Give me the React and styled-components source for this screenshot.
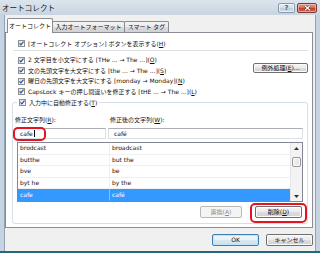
import React from 'react';
import styled, { createGlobalStyle } from 'styled-components';

const FONT = `"DejaVu Sans", "Noto Sans CJK JP", sans-serif`;

const Global = createGlobalStyle`
  html, body { margin: 0; padding: 0; background: #f0f0f0; overflow: hidden; }
  body { font-family: ${FONT}; }
`;

const Window = styled.div`
  position: relative;
  width: 320px;
  height: 253px;
  box-sizing: border-box;
  display: flex;
  flex-direction: column;
  background: #c6d3e0;
  border-bottom: 2px solid #26677b;
  font-family: ${FONT};
  font-size: 6px;
  color: #111;
`;

const TitleBar = styled.div`
  flex: none;
  height: 15px;
  display: flex;
  align-items: center;
  padding: 0 3px 0 2px;
  background: linear-gradient(#dce5ee, #c8d4e0);
`;

const Title = styled.span`
  flex: 1;
  font-family: "Noto Sans CJK JP", sans-serif;
  font-size: 7.6px;
  line-height: 15px;
  color: #1a1a1a;
`;

const CaptionButtons = styled.div`
  display: flex;
  gap: 2px;
  align-items: center;
`;

const CaptionButton = styled.div`
  box-sizing: border-box;
  width: ${p => p.$w}px;
  height: 10px;
  border-radius: 2px;
  display: flex;
  align-items: center;
  justify-content: center;
  border: 1px solid ${p => (p.$close ? '#7d3b33' : '#8798ab')};
  background: ${p =>
    p.$close
      ? 'linear-gradient(#e4a395 0%, #d26d5b 45%, #c2412c 55%, #cf6a4f 100%)'
      : 'linear-gradient(#e6edf4 0%, #d3dee9 45%, #c2d0de 55%, #cfdbe7 100%)'};
  box-shadow: inset 0 0 0 1px ${p => (p.$close ? 'rgba(255,220,210,0.5)' : 'rgba(255,255,255,0.6)')};
  font-family: "DejaVu Sans", sans-serif;
  font-size: 7px;
  font-weight: bold;
  color: #52657a;
`;

const Client = styled.div`
  flex: 1;
  display: flex;
  flex-direction: column;
  margin: 0 4px;
  padding: 0 2px 0 0;
  background: #f0f0f0;
  border-left: 1px solid #8fa2b6;
  border-right: 1px solid #8fa2b6;
`;

const TabStrip = styled.div`
  flex: none;
  height: 17px;
  display: flex;
  align-items: flex-end;
  padding-left: 2px;
`;

const Tab = styled.div`
  box-sizing: border-box;
  position: relative;
  z-index: ${p => (p.$active ? 2 : 1)};
  width: ${p => p.$w}px;
  height: ${p => (p.$active ? 15 : 11.5)}px;
  margin-left: ${p => (p.$first ? 0 : -1)}px;
  margin-bottom: ${p => (p.$active ? -1 : 0)}px;
  display: flex;
  align-items: center;
  justify-content: center;
  padding-bottom: ${p => (p.$active ? 1 : 0)}px;
  border: 1px solid #898c95;
  border-bottom: none;
  border-radius: 2px 2px 0 0;
  background: ${p => (p.$active ? '#ffffff' : 'linear-gradient(#f4f4f4 0%, #e9e9e9 50%, #dadada 55%, #d2d2d2 100%)')};
  white-space: nowrap;
  line-height: 1;
`;

const Panel = styled.div`
  flex: none;
  box-sizing: border-box;
  height: 196px;
  display: flex;
  flex-direction: column;
  padding: 0 4px 0 6px;
  border: 1px solid #898c95;
  background: #ffffff;
`;

const CheckRow = styled.div`
  display: flex;
  align-items: center;
  gap: 3px;
  height: ${p => p.$h}px;
  padding-left: ${p => p.$indent || 0}px;
  white-space: nowrap;
  line-height: 1;
`;

const Box = styled.span`
  flex: none;
  width: 7px;
  height: 7px;
  box-sizing: border-box;
  border: 1px solid #8e8f8f;
  background: linear-gradient(135deg, #dedede, #fdfdfd);
  display: flex;
  align-items: center;
  justify-content: center;
`;

const Checkbox = () => (
  <Box>
    <svg width="5" height="5" viewBox="0 0 5 5">
      <path d="M0.5 2.4 L1.9 3.9 L4.5 0.7" fill="none" stroke="#21509f" strokeWidth="1.1" />
    </svg>
  </Box>
);

const FirstRow = styled(CheckRow)`
  margin-top: 5px;
`;

const Separator = styled.div`
  height: 1px;
  margin: 1px 0 0 1px;
  background: #dcdfe3;
`;

const OptionsSection = styled.div`
  display: flex;
  margin-top: 4px;
`;

const OptionList = styled.div`
  flex: 1;
  display: flex;
  flex-direction: column;
`;

const Button = styled.button`
  box-sizing: border-box;
  flex: none;
  width: ${p => p.$w}px;
  height: ${p => p.$h || 12}px;
  margin: 0;
  padding: 0;
  font-family: ${FONT};
  font-size: 6px;
  line-height: 1;
  color: ${p => (p.disabled ? '#8d8d8d' : '#111')};
  border: 1px solid ${p => (p.$default ? '#3c7fb1' : p.disabled ? '#b5b9bc' : '#707070')};
  border-radius: 2px;
  background: ${p =>
    p.disabled
      ? '#f4f4f4'
      : p.$default
      ? 'linear-gradient(#f2f8fc 0%, #e8f2f9 45%, #d8e8f3 50%, #cfe1ee 100%)'
      : 'linear-gradient(#f4f4f4 0%, #ececec 45%, #dedede 50%, #d2d2d2 100%)'};
  box-shadow: inset 0 0 0 1px ${p => (p.$default ? '#bfe5fa' : p.disabled ? '#f4f4f4' : '#fbfbfb')};
  display: flex;
  align-items: center;
  justify-content: center;
  white-space: nowrap;
`;

const ExceptionButton = styled(Button)`
  margin-top: 8px;
`;

const Group = styled.fieldset`
  margin: 0;
  min-width: 0;
  padding: 6px 4px 5px 1px;
  border: 1px solid #d5dfe5;
  border-radius: 3px;
`;

const Legend = styled.legend`
  padding: 0 2px;
  margin-left: 3px;
`;

const FieldGrid = styled.div`
  display: grid;
  grid-template-columns: 92px 1fr;
  grid-template-rows: 11px 11px;
  column-gap: 2px;
  row-gap: 3px;
`;

const FieldLabel = styled.div`
  display: flex;
  align-items: center;
  padding-left: ${p => p.$indent}px;
  white-space: nowrap;
  line-height: 1;
`;

const TextBox = styled.div`
  position: relative;
  box-sizing: border-box;
  display: flex;
  align-items: center;
  padding-left: 5px;
  border: 1px solid #dbdfe6;
  border-top-color: #abadb3;
  background: #fff;
  line-height: 1;
`;

const Caret = styled.span`
  width: 1px;
  height: 7px;
  margin-left: 1px;
  background: #000;
`;

const Annotation = styled.div`
  position: absolute;
  box-sizing: border-box;
  left: ${p => p.$x}px;
  top: ${p => p.$y}px;
  width: ${p => p.$w}px;
  height: ${p => p.$h}px;
  border: 2px solid #e3141f;
  border-radius: 5px;
  pointer-events: none;
`;

const List = styled.div`
  box-sizing: border-box;
  height: 60px;
  margin: 3px 0 0 3px;
  display: flex;
  border: 1px solid #828790;
  background: #fff;
`;

const ListBody = styled.div`
  flex: 1;
  display: flex;
  flex-direction: column;
`;

const ListRow = styled.div`
  flex: 1;
  display: grid;
  grid-template-columns: 91px 1fr;
  background: ${p => (p.$selected ? '#3399ff' : 'transparent')};
  color: ${p => (p.$selected ? '#fff' : '#111')};
`;

const Cell = styled.div`
  display: flex;
  align-items: center;
  padding-left: 2px;
  white-space: nowrap;
  line-height: 1;
  border-bottom: 1px solid ${p => (p.$selected ? '#3399ff' : '#f0f0f0')};
  border-left: ${p => (p.$second ? `1px solid ${p.$selected ? '#7fbfff' : '#f0f0f0'}` : 'none')};
`;

const ScrollBar = styled.div`
  width: 11px;
  display: flex;
  flex-direction: column;
  background: #f3f3f3;
  border-left: 1px solid #e6e6e6;
`;

const Arrow = styled.div`
  height: 10px;
  display: flex;
  align-items: center;
  justify-content: center;
`;

const Track = styled.div`
  flex: 1;
  display: flex;
  flex-direction: column;
  padding: 4px 1px 0;
`;

const Thumb = styled.div`
  height: 10px;
  box-sizing: border-box;
  border: 1px solid #979797;
  border-radius: 2px;
  background: linear-gradient(90deg, #f3f3f3, #e2e2e2);
  box-shadow: inset 0 0 0 1px #fbfbfb;
`;

const GroupButtons = styled.div`
  display: flex;
  justify-content: flex-end;
  gap: 13px;
  margin: 4px 1px 0 0;
`;

const AnnotatedSlot = styled.div`
  position: relative;
`;

const Footer = styled.div`
  flex: 1;
  display: flex;
  justify-content: flex-end;
  align-items: flex-start;
  gap: 7px;
  padding-top: 6px;
`;

const options = [
  ['2 文字目を小文字にする [THe ... → The ...](', 'O', ')'],
  ['文の先頭文字を大文字にする [the ... → The ...](', 'S', ')'],
  ['曜日の先頭文字を大文字にする [monday → Monday](', 'N', ')'],
  ['CapsLock キーの押し間違いを修正する [tHE ... → The ...](', 'L', ')'],
];

const entries = [
  ['brodcast', 'broadcast'],
  ['butthe', 'but the'],
  ['bve', 'be'],
  ['byt he', 'by the'],
  ['cafe', 'café'],
];

const UpArrow = () => (
  <svg width="5" height="3" viewBox="0 0 5 3">
    <path d="M0 3 L2.5 0 L5 3 Z" fill="#333" />
  </svg>
);

const DownArrow = () => (
  <svg width="5" height="3" viewBox="0 0 5 3">
    <path d="M0 0 L2.5 3 L5 0 Z" fill="#333" />
  </svg>
);

export default function App() {
  return (
    <>
      <Global />
      <Window>
        <TitleBar>
          <Title>オートコレクト</Title>
          <CaptionButtons>
            <CaptionButton $w={17}>?</CaptionButton>
            <CaptionButton $w={20} $close>
              <svg width="7" height="6" viewBox="0 0 7 6">
                <path d="M1 0.8 L6 5.2 M6 0.8 L1 5.2" stroke="#5a1a12" strokeWidth="2.2" />
                <path d="M1 0.8 L6 5.2 M6 0.8 L1 5.2" stroke="#fff" strokeWidth="1.3" />
              </svg>
            </CaptionButton>
          </CaptionButtons>
        </TitleBar>
        <Client>
          <TabStrip>
            <Tab $active $first $w={46}>オートコレクト</Tab>
            <Tab $w={73}>入力オートフォーマット</Tab>
            <Tab $w={45}>スマート タグ</Tab>
          </TabStrip>
          <Panel>
            <FirstRow $h={11} $indent={6}>
              <Checkbox />
              <span>[オートコレクト オプション] ボタンを表示する(<u>H</u>)</span>
            </FirstRow>
            <Separator />
            <OptionsSection>
              <OptionList>
                {options.map(([pre, key, post]) => (
                  <CheckRow key={key} $h={10.5} $indent={6}>
                    <Checkbox />
                    <span>
                      {pre}
                      <u>{key}</u>
                      {post}
                    </span>
                  </CheckRow>
                ))}
              </OptionList>
              <ExceptionButton $w={55} $h={10}>
                例外処理(<u>E</u>)...
              </ExceptionButton>
            </OptionsSection>
            <Group>
              <Legend>
                <CheckRow $h={11}>
                  <Checkbox />
                  <span>入力中に自動修正する(<u>T</u>)</span>
                </CheckRow>
              </Legend>
              <FieldGrid>
                <FieldLabel $indent={1}>修正文字列(<u>R</u>):</FieldLabel>
                <FieldLabel $indent={2}>修正後の文字列(<u>W</u>):</FieldLabel>
                <TextBox>
                  cafe
                  <Caret />
                  <Annotation $x={-2} $y={-2} $w={33} $h={14} />
                </TextBox>
                <TextBox>café</TextBox>
              </FieldGrid>
              <List>
                <ListBody>
                  {entries.map(([a, b], i) => {
                    const sel = i === entries.length - 1;
                    return (
                      <ListRow key={a} $selected={sel}>
                        <Cell $selected={sel}>{a}</Cell>
                        <Cell $selected={sel} $second>{b}</Cell>
                      </ListRow>
                    );
                  })}
                </ListBody>
                <ScrollBar>
                  <Arrow>
                    <UpArrow />
                  </Arrow>
                  <Track>
                    <Thumb />
                  </Track>
                  <Arrow>
                    <DownArrow />
                  </Arrow>
                </ScrollBar>
              </List>
              <GroupButtons>
                <Button $w={42} disabled>
                  置換(<u>A</u>)
                </Button>
                <AnnotatedSlot>
                  <Button $w={47}>
                    削除(<u>D</u>)
                  </Button>
                  <Annotation $x={-5} $y={-3} $w={57} $h={20} />
                </AnnotatedSlot>
              </GroupButtons>
            </Group>
          </Panel>
          <Footer>
            <Button $w={47} $default>OK</Button>
            <Button $w={47}>キャンセル</Button>
          </Footer>
        </Client>
      </Window>
    </>
  );
}
